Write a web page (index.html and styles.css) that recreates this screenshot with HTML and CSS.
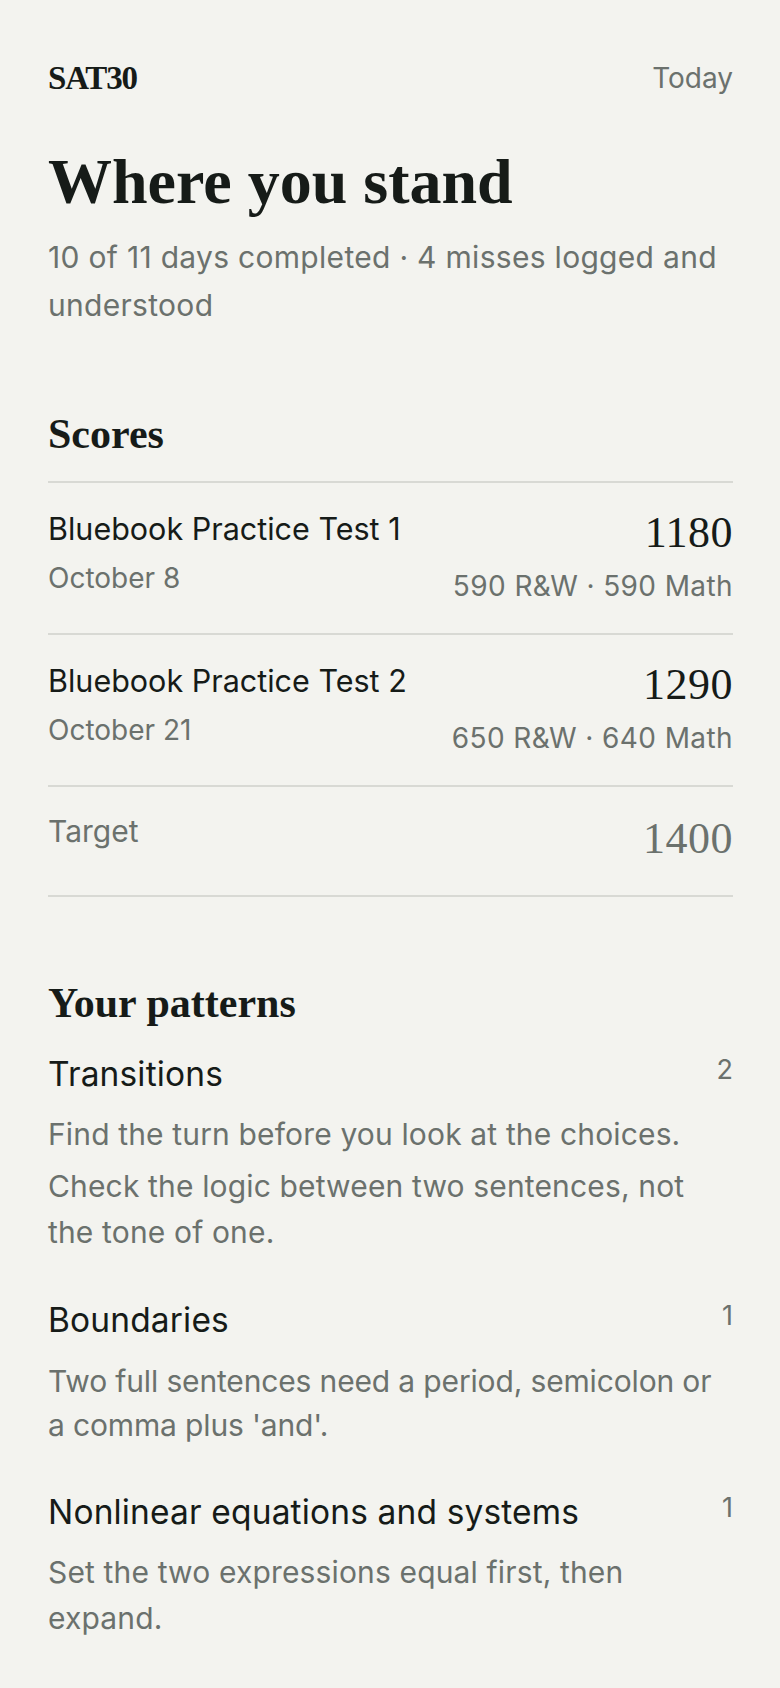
FILE: index.html
```html
<!DOCTYPE html>
<html lang="en">
<head>
    <meta charset="UTF-8">
    <meta name="viewport" content="width=device-width, initial-scale=1.0">
    <title>SAT30 - Where you stand</title>
    <link rel="stylesheet" href="styles.css">
</head>
<body>
    <div class="page">
        <header class="top-bar">
            <span class="logo">SAT30</span>
            <a class="today-link" href="#">Today</a>
        </header>

        <h1 class="page-title">Where you stand</h1>
        <p class="summary">10 of 11 days completed · 4 misses logged and understood</p>

        <!-- Scores -->
        <section class="scores">
            <h2 class="section-title">Scores</h2>
            <div class="score-list">
                <div class="score-row">
                    <div class="score-left">
                        <div class="test-name">Bluebook Practice Test 1</div>
                        <div class="test-date">October 8</div>
                    </div>
                    <div class="score-right">
                        <div class="score-total">1180</div>
                        <div class="score-split">590 R&amp;W · 590 Math</div>
                    </div>
                </div>

                <div class="score-row">
                    <div class="score-left">
                        <div class="test-name">Bluebook Practice Test 2</div>
                        <div class="test-date">October 21</div>
                    </div>
                    <div class="score-right">
                        <div class="score-total">1290</div>
                        <div class="score-split">650 R&amp;W · 640 Math</div>
                    </div>
                </div>

                <div class="score-row target-row">
                    <div class="target-label">Target</div>
                    <div class="score-total target-total">1400</div>
                </div>
            </div>
        </section>

        <!-- Patterns -->
        <section class="patterns">
            <h2 class="section-title">Your patterns</h2>

            <div class="pattern">
                <div class="pattern-head">
                    <span class="pattern-name">Transitions</span>
                    <span class="pattern-count">2</span>
                </div>
                <p class="pattern-tip">Find the turn before you look at the choices.</p>
                <p class="pattern-tip">Check the logic between two sentences, not the tone of one.</p>
            </div>

            <div class="pattern pattern-compact">
                <div class="pattern-head">
                    <span class="pattern-name">Boundaries</span>
                    <span class="pattern-count">1</span>
                </div>
                <p class="pattern-tip">Two full sentences need a period, semicolon or a comma plus 'and'.</p>
            </div>

            <div class="pattern">
                <div class="pattern-head">
                    <span class="pattern-name">Nonlinear equations and systems</span>
                    <span class="pattern-count">1</span>
                </div>
                <p class="pattern-tip">Set the two expressions equal first, then expand.</p>
            </div>
        </section>
    </div>
</body>
</html>
```

FILE: styles.css
```css
/* SAT30 progress page */
body {
    background-color: #f3f3ef;
    color: #161b18;
    font-family: Inter, "Noto Sans", sans-serif;
    margin: 0;
    padding: 0;
}

.page {
    padding: 58px 47px 60px 48px;
}

.top-bar {
    display: flex;
    justify-content: space-between;
    align-items: flex-start;
}

.logo {
    font-family: "Liberation Serif", serif;
    font-weight: bold;
    font-size: 33px;
    line-height: 40px;
    letter-spacing: -1.2px;
}

.today-link {
    color: #6b716d;
    text-decoration: none;
    font-size: 28px;
    line-height: 40px;
}

.page-title {
    font-family: "Liberation Serif", serif;
    font-weight: bold;
    font-size: 64px;
    line-height: 72px;
    margin: 48px 0 0;
}

.summary {
    color: #6b716d;
    font-size: 30px;
    line-height: 48px;
    letter-spacing: 0.3px;
    margin: 15px 0 0;
}

.section-title {
    font-family: "Liberation Serif", serif;
    font-weight: bold;
    font-size: 42px;
    line-height: 48px;
    margin: 0;
}

.scores {
    margin-top: 81px;
}

.score-list {
    margin-top: 23px;
    border-top: 2px solid #d8d9d4;
}

.score-row {
    display: flex;
    justify-content: space-between;
    align-items: flex-start;
    padding: 26px 0 29px;
    border-bottom: 2px solid #d8d9d4;
}

.test-name {
    font-size: 30.5px;
    line-height: 40px;
}

.test-date {
    color: #6b716d;
    font-size: 28px;
    line-height: 36px;
    margin-top: 11px;
}

.score-right {
    text-align: right;
}

.score-total {
    font-family: "Liberation Serif", serif;
    font-size: 44px;
    line-height: 48px;
    letter-spacing: 0.5px;
}

.score-split {
    color: #6b716d;
    font-size: 28px;
    line-height: 36px;
    letter-spacing: 0.4px;
    margin-top: 11px;
}

.target-row {
    padding: 28px 0 32px;
}

.target-label {
    color: #6b716d;
    font-size: 30px;
    line-height: 33px;
}

.target-total {
    color: #6b716d;
}

.patterns {
    margin-top: 82px;
}

.pattern {
    margin-top: 25px;
}

.pattern + .pattern {
    margin-top: 43px;
}

.pattern-head {
    display: flex;
    justify-content: space-between;
    align-items: flex-start;
}

.pattern-name {
    font-size: 33.5px;
    line-height: 44px;
    letter-spacing: 0.15px;
}

.pattern-count {
    color: #6b716d;
    font-size: 27px;
    line-height: 36px;
}

.pattern-tip {
    color: #6b716d;
    font-size: 30px;
    line-height: 46px;
    letter-spacing: 0.15px;
    margin: 6px 0 0;
}

.pattern-head + .pattern-tip {
    margin-top: 15px;
}

.pattern-compact {
    margin-bottom: 6px;
}

.pattern-compact .pattern-tip {
    line-height: 44px;
    letter-spacing: -0.15px;
}

.pattern-compact .pattern-head + .pattern-tip {
    margin-top: 17px;
}
```
